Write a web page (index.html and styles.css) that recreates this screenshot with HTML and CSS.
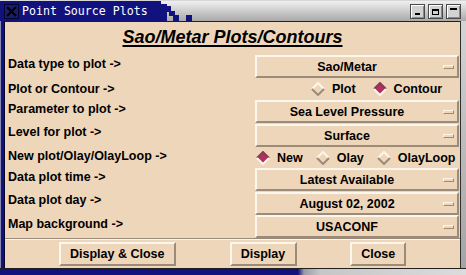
FILE: index.html
```html
<!DOCTYPE html>
<html lang="en">
<head>
  <meta charset="UTF-8">
  <title>Point Source Plots</title>
  <link rel="stylesheet" href="styles.css">
</head>
<body>

<div class="window">
  <div class="titlebar">
    <div class="title-left">
      <svg class="close-box" width="15" height="15" viewBox="0 0 15 15">
        <rect x="0.5" y="0.5" width="14" height="14" fill="#1c1c6e" stroke="#05052a"/>
        <path d="M3 3 L12 12 M12 3 L3 12" stroke="#000" stroke-width="2.4"/>
      </svg>
      <span class="title-text">Point Source Plots</span>
    </div>
    <svg class="dither" width="40" height="20" viewBox="0 0 40 20">
      <rect x="0" y="0" width="3" height="20" fill="#12127f"/>
      <rect x="3" y="3" width="6" height="17" fill="#12127f"/>
      <rect x="7" y="5" width="6" height="6" fill="#12127f"/>
      <rect x="11" y="10" width="6" height="5" fill="#12127f"/>
      <rect x="15" y="14" width="6" height="6" fill="#12127f"/>
      <rect x="28" y="14" width="6" height="6" fill="#12127f"/>
    </svg>
    <div class="title-fill"></div>
    <div class="wm-buttons">
      <span class="wm-btn">
        <svg width="13" height="13" viewBox="0 0 13 13"><rect x="4" y="8" width="5" height="2" fill="#000"/></svg>
      </span>
      <span class="wm-btn">
        <svg width="13" height="13" viewBox="0 0 13 13"><rect x="3.5" y="4.5" width="6" height="5" fill="none" stroke="#000"/><rect x="3" y="4" width="7" height="2" fill="#000"/></svg>
      </span>
      <span class="wm-btn">
        <svg width="13" height="13" viewBox="0 0 13 13"><rect x="3" y="3" width="7" height="2" fill="#000"/></svg>
      </span>
    </div>
  </div>

  <div class="frame-middle">
    <div class="frame-left"></div>
    <div class="content">
      <h1 class="heading">Sao/Metar Plots/Contours</h1>

      <div class="form">
        <div class="label">Data type to plot -&gt;</div>
        <div class="option-menu"><span class="value">Sao/Metar</span><i class="indicator"></i></div>

        <div class="label label-radio">Plot or Contour -&gt;</div>
        <div class="radio-group plot-group">
          <label class="radio">
            <svg class="diamond" width="14" height="14" viewBox="0 0 14 14">
              <polygon points="7,1 13,7 7,13 1,7" fill="#eed6ba"/>
              <polyline points="1,7 7,1 13,7" fill="none" stroke="#fdf6ec" stroke-width="2"/>
              <polyline points="1,7 7,13 13,7" fill="none" stroke="#9c8b79" stroke-width="2"/>
            </svg>
            Plot
          </label>
          <label class="radio">
            <svg class="diamond" width="14" height="14" viewBox="0 0 14 14">
              <polygon points="7,1 13,7 7,13 1,7" fill="#b03060"/>
              <polyline points="1,7 7,1 13,7" fill="none" stroke="#8a3a52" stroke-width="2"/>
              <polyline points="1,7 7,13 13,7" fill="none" stroke="#fdf6ec" stroke-width="2"/>
            </svg>
            Contour
          </label>
        </div>

        <div class="label">Parameter to plot -&gt;</div>
        <div class="option-menu"><span class="value">Sea Level Pressure</span><i class="indicator"></i></div>

        <div class="label">Level for plot -&gt;</div>
        <div class="option-menu"><span class="value">Surface</span><i class="indicator"></i></div>

        <div class="label">New plot/Olay/OlayLoop -&gt;</div>
        <div class="radio-group">
          <label class="radio">
            <svg class="diamond" width="14" height="14" viewBox="0 0 14 14">
              <polygon points="7,1 13,7 7,13 1,7" fill="#b03060"/>
              <polyline points="1,7 7,1 13,7" fill="none" stroke="#8a3a52" stroke-width="2"/>
              <polyline points="1,7 7,13 13,7" fill="none" stroke="#fdf6ec" stroke-width="2"/>
            </svg>
            New
          </label>
          <label class="radio">
            <svg class="diamond" width="14" height="14" viewBox="0 0 14 14">
              <polygon points="7,1 13,7 7,13 1,7" fill="#eed6ba"/>
              <polyline points="1,7 7,1 13,7" fill="none" stroke="#fdf6ec" stroke-width="2"/>
              <polyline points="1,7 7,13 13,7" fill="none" stroke="#9c8b79" stroke-width="2"/>
            </svg>
            Olay
          </label>
          <label class="radio">
            <svg class="diamond" width="14" height="14" viewBox="0 0 14 14">
              <polygon points="7,1 13,7 7,13 1,7" fill="#eed6ba"/>
              <polyline points="1,7 7,1 13,7" fill="none" stroke="#fdf6ec" stroke-width="2"/>
              <polyline points="1,7 7,13 13,7" fill="none" stroke="#9c8b79" stroke-width="2"/>
            </svg>
            OlayLoop
          </label>
        </div>

        <div class="label">Data plot time -&gt;</div>
        <div class="option-menu"><span class="value">Latest Available</span><i class="indicator"></i></div>

        <div class="label">Data plot day -&gt;</div>
        <div class="option-menu"><span class="value">August 02, 2002</span><i class="indicator"></i></div>

        <div class="label">Map background -&gt;</div>
        <div class="option-menu"><span class="value">USACONF</span><i class="indicator"></i></div>
      </div>

      <div class="separator"></div>

      <div class="actions">
        <button class="btn btn-display-close">Display &amp; Close</button>
        <button class="btn btn-display">Display</button>
        <button class="btn btn-close">Close</button>
      </div>
    </div>
    <div class="frame-right"></div>
  </div>

  <div class="frame-bottom"></div>
</div>

</body>
</html>
```

FILE: styles.css
```css
* {
  box-sizing: border-box;
}

body {
  margin: 0;
  background: #ffffff;
  font-family: "Liberation Sans", Arial, sans-serif;
}

.window {
  width: 466px;
  height: 275px;
  display: flex;
  flex-direction: column;
}

/* title bar */
.titlebar {
  height: 21px;
  display: flex;
  background: linear-gradient(#f0f0f0, #a9a9a9);
  border-top: 1px solid #d6d6d6;
}

.title-left {
  width: 158px;
  background: #12127f;
  display: flex;
  align-items: center;
  padding-left: 4px;
}

.close-box {
  flex: none;
}

.title-text {
  margin-left: 3px;
  color: #ffffff;
  font-family: "DejaVu Sans Mono", monospace;
  font-size: 11.6px;
  white-space: nowrap;
}

.dither {
  flex: none;
}

.title-fill {
  flex: 1;
}

.wm-buttons {
  display: flex;
  align-items: center;
  gap: 3px;
  padding-right: 5px;
}

.wm-btn {
  width: 15px;
  height: 15px;
  display: flex;
  background: #d2d2d2;
  border: 1px solid #4a4a4a;
  box-shadow: inset 1px 1px 0 #ffffff, inset -1px -1px 0 #8a8a8a;
}

/* frame */
.frame-middle {
  flex: 1;
  display: flex;
}

.frame-left {
  width: 5px;
  background: #12127f;
  border-left: 1px solid #8a8ab0;
  border-right: 1px solid #05052a;
}

.frame-right {
  flex: 1;
  background: linear-gradient(#d4d4d4, #a4a4a4);
  border-left: 1px solid #303030;
}

.frame-bottom {
  height: 7px;
  background: linear-gradient(to right, #12127f 0 298px, #9a9aa8 304px, #c6c6c6 320px, #dcdcdc);
  border-top: 1px solid #202020;
}

/* dialog content */
.content {
  width: 455px;
  background: #eed6ba;
  border-top: 1px solid #202020;
  display: flex;
  flex-direction: column;
  color: #000000;
}

.heading {
  margin: 0;
  height: 33px;
  padding-top: 4px;
  line-height: 22px;
  text-align: center;
  font-size: 18px;
  font-style: italic;
  font-weight: bold;
  text-decoration: underline;
  text-decoration-thickness: 2px;
  text-underline-offset: 2px;
}

.form {
  display: grid;
  grid-template-columns: 1fr 204px;
  grid-template-rows: 23px 22px 23px 24px 21px 23px 24px 23px;
  padding: 0 1px 0 3px;
}

.label {
  font-size: 12.5px;
  font-weight: bold;
  line-height: 15px;
  padding-top: 2px;
  white-space: nowrap;
}

.label-radio {
  padding-top: 4px;
}

.option-menu {
  align-self: end;
  height: 23px;
  display: flex;
  align-items: center;
  border: 2px solid;
  border-color: #fdf6ec #9c8b79 #9c8b79 #fdf6ec;
  font-size: 12.5px;
  font-weight: bold;
}

.option-menu .value {
  flex: 1;
  text-align: center;
  white-space: nowrap;
}

.indicator {
  width: 11px;
  height: 4px;
  margin: 0 3px 0 6px;
  border: 1px solid;
  border-color: #fdf6ec #9c8b79 #9c8b79 #fdf6ec;
}

.radio-group {
  display: flex;
  align-items: center;
  gap: 13px;
  padding-left: 1px;
}

.plot-group {
  padding-left: 56px;
  gap: 17px;
}

.radio {
  display: flex;
  align-items: center;
  gap: 7px;
  font-size: 12.5px;
  font-weight: bold;
  white-space: nowrap;
}

.diamond {
  flex: none;
}

.separator {
  height: 2px;
  border-top: 1px solid #9c8b79;
  border-bottom: 1px solid #fdf6ec;
}

.actions {
  flex: 1;
  display: flex;
  justify-content: space-evenly;
  align-items: center;
}

.btn {
  height: 24px;
  padding: 0;
  background: #eed6ba;
  border: 2px solid;
  border-color: #fdf6ec #9c8b79 #9c8b79 #fdf6ec;
  font-family: "Liberation Sans", Arial, sans-serif;
  font-size: 12.5px;
  font-weight: bold;
  color: #000000;
}

.btn-display-close {
  width: 117px;
}

.btn-display {
  width: 67px;
}

.btn-close {
  width: 56px;
}
```
